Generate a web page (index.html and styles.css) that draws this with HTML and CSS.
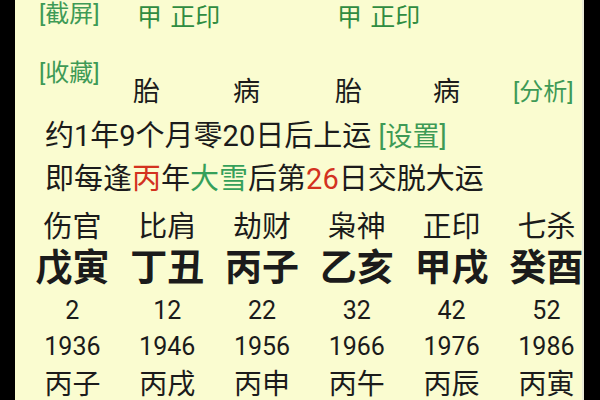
FILE: index.html
```html
<!DOCTYPE html>
<html lang="zh-CN">
<head>
<meta charset="utf-8">
<link rel="stylesheet" href="styles.css">
</head>
<body>
<div class="screen">
  <div class="top">
    <div class="label r1">[截屏]</div>
    <div class="gan c2">甲 正印</div>
    <div class="gan c4">甲 正印</div>
    <div class="label r2">[收藏]</div>
    <div class="stage s2">胎</div>
    <div class="stage s3">病</div>
    <div class="stage s4">胎</div>
    <div class="stage s5">病</div>
    <div class="label r2b s6">[分析]</div>
  </div>
  <div class="yun">
    <div class="line">约1年9个月零20日后上运 <span class="link">[设置]</span></div>
    <div class="line">即每逢<span class="red">丙</span>年<span class="green">大雪</span>后第<span class="red">26</span>日交脱大运</div>
  </div>
  <div class="pillars">
    <div class="god">伤官</div><div class="god">比肩</div><div class="god">劫财</div><div class="god">枭神</div><div class="god">正印</div><div class="god">七杀</div>
    <div class="gz">戊寅</div><div class="gz">丁丑</div><div class="gz">丙子</div><div class="gz">乙亥</div><div class="gz">甲戌</div><div class="gz">癸酉</div>
    <div class="age">2</div><div class="age">12</div><div class="age">22</div><div class="age">32</div><div class="age">42</div><div class="age">52</div>
    <div class="year">1936</div><div class="year">1946</div><div class="year">1956</div><div class="year">1966</div><div class="year">1976</div><div class="year">1986</div>
    <div class="dy">丙子</div><div class="dy">丙戌</div><div class="dy">丙申</div><div class="dy">丙午</div><div class="dy">丙辰</div><div class="dy">丙寅</div>
  </div>
</div>
</body>
</html>
```

FILE: styles.css
```css
html, body {
  margin: 0;
  padding: 0;
  background: #000;
  width: 600px;
  height: 400px;
  overflow: hidden;
}

.screen {
  margin-left: 15px;
  width: 567px;
  height: 400px;
  background: #fafcd0;
  border-right: 2px solid #e9ead6;
  overflow: hidden;
  font-family: Roboto, "Noto Sans CJK SC", sans-serif;
  color: #1b1b1b;
}

.top {
  display: grid;
  grid-template-columns: 118px 100px 100px 100px 80px 1fr;
  grid-template-rows: 56px 52px;
}

.label {
  color: #3e9a56;
  font-size: 24px;
  line-height: 28px;
  white-space: nowrap;
}

.r1 {
  grid-row: 1;
  grid-column: 1;
  padding-left: 24px;
  align-self: start;
  margin-top: 0;
}

.r2 {
  grid-row: 2;
  grid-column: 1;
  padding-left: 24px;
  align-self: start;
  margin-top: 3px;
}

.r2b {
  grid-row: 2;
  align-self: end;
  margin-bottom: 2px;
}

.gan {
  grid-row: 1;
  color: #2f8c40;
  font-size: 25px;
  line-height: 30px;
  align-self: start;
  margin-top: 3px;
  white-space: nowrap;
  word-spacing: 2px;
}

.c2 { grid-column: 2 / span 2; padding-left: 4px; }
.c4 { grid-column: 4 / span 2; padding-left: 4px; }

.stage {
  grid-row: 2;
  font-size: 27px;
  line-height: 30px;
  align-self: end;
  margin-bottom: 1px;
}

.s2 { grid-column: 2; }
.s3 { grid-column: 3; }
.s4 { grid-column: 4; padding-left: 2px; }
.s5 { grid-column: 5; }
.s6 { grid-column: 6; }

.yun {
  padding: 7px 0 0 30px;
}

.line {
  font-size: 29px;
  line-height: 42px;
  white-space: nowrap;
}

.link {
  color: #3e9a56;
  font-size: 27px;
}

.red { color: #d3321f; }
.green { color: #35a05a; }

.pillars {
  display: grid;
  grid-template-columns: repeat(6, 94.8px);
  grid-template-rows: 44px 43px 42px 30px 48px;
  padding: 2px 0 0 10px;
  text-align: center;
  white-space: nowrap;
}

.pillars > div {
  display: flex;
  align-items: center;
  justify-content: center;
}

.god { font-size: 29px; }
.gz { font-size: 37px; font-weight: 700; padding-bottom: 6px; }
.age { font-size: 25px; }
.year { font-size: 25px; }
.dy { font-size: 28px; padding-bottom: 6px; }
```
